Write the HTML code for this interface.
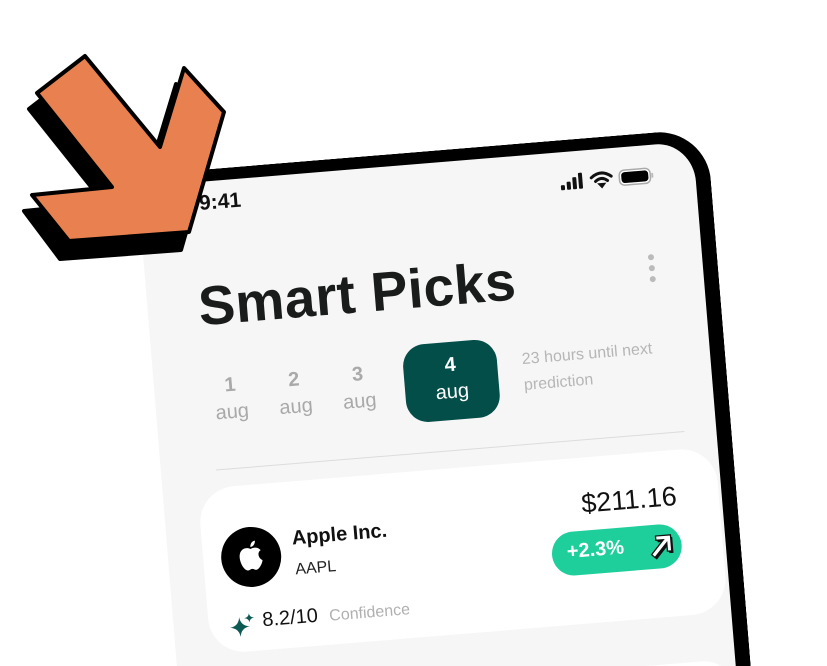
<!DOCTYPE html>
<html><head><meta charset="utf-8"><style>
html,body{margin:0;padding:0;width:827px;height:666px;overflow:hidden;background:#fff;font-family:"Liberation Sans",sans-serif;}
#wrap{position:relative;width:827px;height:666px;overflow:hidden;}
#rot{position:absolute;left:200px;top:215px;width:0;height:0;transform-origin:0 0;transform:rotate(-4.7deg);}
.a{position:absolute;white-space:nowrap;}
#phone{position:absolute;left:-60px;top:-45px;width:572px;height:545px;background:#f6f6f6;border-top:12px solid #000;border-right:15px solid #000;border-radius:0 52px 0 0;box-sizing:border-box;}
.d{position:absolute;width:60px;text-align:center;color:#a9a9a9;font-size:20px;line-height:27px;}
.card{position:absolute;background:#fff;border-radius:36px;}
</style></head><body>
<div id="wrap">
<div id="rot">
  <div id="phone"></div>
  <div class="a" style="left:0;top:-23px;font-size:21px;font-weight:bold;color:#111;">9:41</div>
  <svg class="a" style="left:360px;top:-12px" width="100" height="22" viewBox="0 0 100 22">
    <rect x="2" y="12" width="4" height="5" rx="1" fill="#111"/>
    <rect x="8" y="9" width="4" height="8" rx="1" fill="#111"/>
    <rect x="14" y="5" width="4" height="12" rx="1" fill="#111"/>
    <rect x="20" y="1" width="4" height="16" rx="1" fill="#111"/>
    <path d="M33 7 Q43 -1 53 7" stroke="#111" stroke-width="3" fill="none" stroke-linecap="round"/>
    <path d="M37 11 Q43 6 49 11" stroke="#111" stroke-width="3" fill="none" stroke-linecap="round"/>
    <path d="M40.5 14 L43 17 L45.5 14 Z" fill="#111" stroke="#111" stroke-width="2"/>
    <rect x="61" y="2" width="31" height="15" rx="5" fill="#fff" stroke="#aaa" stroke-width="1.5"/>
    <rect x="63" y="4" width="27" height="11" rx="3.5" fill="#000"/>
    <rect x="93" y="7" width="2" height="5" rx="1" fill="#bbb"/>
  </svg>
  <div class="a" style="left:-9px;top:61px;font-size:55px;line-height:60px;font-weight:bold;color:#1a1c1b;letter-spacing:0.3px;">Smart Picks</div>
  <div class="a" style="left:443px;top:76px;width:6px;height:6px;border-radius:3px;background:#bbb;"></div>
  <div class="a" style="left:443px;top:87px;width:6px;height:6px;border-radius:3px;background:#bbb;"></div>
  <div class="a" style="left:443px;top:98px;width:6px;height:6px;border-radius:3px;background:#bbb;"></div>
  <div class="d" style="left:-14px;top:159px;"><b>1</b><br>aug</div>
  <div class="d" style="left:50px;top:159px;"><b>2</b><br>aug</div>
  <div class="d" style="left:114px;top:159px;"><b>3</b><br>aug</div>
  <div class="a" style="left:190px;top:147px;width:94px;height:78px;border-radius:22px;background:#044e4a;"></div>
  <div class="d" style="left:207px;top:157px;color:#fff;"><b>4</b><br>aug</div>
  <div class="a" style="left:309px;top:158px;font-size:16px;line-height:26px;color:#b6b6b6;">23 hours until next<br>prediction</div>
  <div class="a" style="left:-5px;top:255px;width:470px;height:1px;background:#dcdcdc;"></div>
  <div class="card" style="left:-25px;top:273px;width:519px;height:166px;"></div>
  <div class="card" style="left:-25px;top:486px;width:519px;height:60px;"></div>
  <div class="a" style="left:-7px;top:315px;width:60px;height:60px;border-radius:30px;background:#000;"></div>
  <svg class="a" style="left:10px;top:328px" width="26" height="32" viewBox="0 0 26 32">
    <path d="M13 9 C10 7 4 7 2 13 C0 19 4 29 8 30 C10 31 11 29 13 29 C15 29 16 31 18 30 C21 29 24 23 24 21 C20 19 19 13 23 11 C21 8 17 7 13 9 Z" fill="#fff"/>
    <path d="M13 7 C13 4 15 1 18 1 C18 4 16 7 13 7 Z" fill="#fff"/>
  </svg>
  <div class="a" style="left:65px;top:319px;font-size:20px;font-weight:bold;color:#111;">Apple Inc.</div>
  <div class="a" style="left:66px;top:353px;font-size:16px;color:#222;">AAPL</div>
  <div class="a" style="left:342px;top:304px;width:110px;text-align:right;font-size:27px;color:#111;">$211.16</div>
  <div class="a" style="left:323px;top:346px;width:130px;height:44px;border-radius:22px;background:#1ecf9c;"></div>
  <div class="a" style="left:338px;top:355px;font-size:20px;font-weight:bold;color:#fff;">+2.3%</div>
  <svg class="a" style="left:419px;top:353px" width="28" height="30" viewBox="0 0 26 28">
    <path d="M6 24 L18 11 L18 19 L22 19 L22 4 L8 4 L8 8 L15 8 L3 21 Z" fill="#111" transform="translate(1.5,2)"/>
    <path d="M6 24 L18 11 L18 19 L22 19 L22 4 L8 4 L8 8 L15 8 L3 21 Z" fill="#fff" stroke="#111" stroke-width="1.2"/>
  </svg>
  <svg class="a" style="left:-4px;top:400px" width="26" height="26" viewBox="0 0 26 26">
    <path d="M10 4 Q11 13 20 14 Q11 15 10 24 Q9 15 0 14 Q9 13 10 4 Z" fill="#0d5a55"/>
    <path d="M20 1 Q20.5 5 25 5.5 Q20.5 6 20 10 Q19.5 6 15 5.5 Q19.5 5 20 1 Z" fill="#0d5a55"/>
  </svg>
  <div class="a" style="left:29px;top:398px;font-size:20px;color:#111;">8.2/10</div>
  <div class="a" style="left:96px;top:402px;font-size:16px;color:#b0b0b0;">Confidence</div>
</div>
<svg class="a" style="left:0;top:0" width="827" height="666" viewBox="0 0 827 666">
  <g stroke="#000" stroke-width="4" stroke-linejoin="round">
    <polygon fill="#000" points="77,72 152,163 176,84 216,128 181,250 60,259 24,211 104,203 29,109"/>
    <polygon fill="#e8804f" points="85,56 160,147 184,68 224,112 189,232 69,241 32,195 112,187 37,93"/>
  </g>
</svg>
</div>
</body></html>
